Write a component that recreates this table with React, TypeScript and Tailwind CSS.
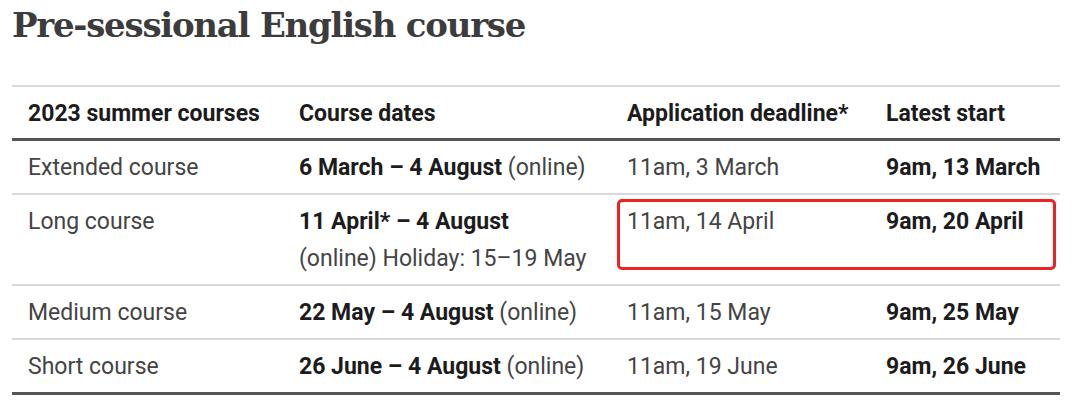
const rows = [
  {
    name: 'Extended course',
    dates: (
      <>
        <b className="font-bold text-[#1c1c1c]">6 March – 4 August</b> (online)
      </>
    ),
    deadline: '11am, 3 March',
    start: '9am, 13 March',
  },
  {
    name: 'Long course',
    dates: (
      <>
        <b className="font-bold text-[#1c1c1c]">11 April* – 4 August</b>
        <br />
        (online) Holiday: 15–19 May
      </>
    ),
    deadline: '11am, 14 April',
    start: '9am, 20 April',
    highlight: true,
  },
  {
    name: 'Medium course',
    dates: (
      <>
        <b className="font-bold text-[#1c1c1c]">22 May – 4 August</b> (online)
      </>
    ),
    deadline: '11am, 15 May',
    start: '9am, 25 May',
  },
  {
    name: 'Short course',
    dates: (
      <>
        <b className="font-bold text-[#1c1c1c]">26 June – 4 August</b> (online)
      </>
    ),
    deadline: '11am, 19 June',
    start: '9am, 26 June',
  },
];

export default function App() {
  return (
    <main className="w-[1080px] h-[411px] bg-white px-3 pt-[3px] font-['Roboto',sans-serif] text-[#444]">
      <h1 className="font-['DejaVu_Serif',serif] text-[34px] leading-[44px] font-bold tracking-[-1.25px] text-[#3c3c3c]">
        Pre-sessional English course
      </h1>

      <table className="mt-[38px] w-[1048px] border-collapse table-fixed text-[23px] leading-[37px]">
        <colgroup>
          <col className="w-[271px]" />
          <col className="w-[328px]" />
          <col className="w-[259px]" />
          <col className="w-[190px]" />
        </colgroup>
        <thead>
          <tr className="border-t-2 border-[#d9d9d9] border-b-[3px] border-b-[#555]">
            <th className="h-[53px] pl-4 pt-[2px] text-left font-bold text-[#1c1c1c]">2023 summer courses</th>
            <th className="pl-4 pt-[2px] text-left font-bold text-[#1c1c1c]">Course dates</th>
            <th className="pl-4 pt-[2px] text-left font-bold text-[#1c1c1c]">Application deadline*</th>
            <th className="pl-4 pt-[2px] text-left font-bold text-[#1c1c1c]">Latest start</th>
          </tr>
        </thead>
        <tbody>
          {rows.map((r, i) => (
            <tr
              key={r.name}
              className={
                i === rows.length - 1
                  ? 'border-b-[3px] border-[#555]'
                  : 'border-b-2 border-[#d9d9d9]'
              }
            >
              <td className="pl-4 pt-[8px] pb-[7px] align-top">{r.name}</td>
              <td className="pl-4 pt-[8px] pb-[7px] align-top whitespace-nowrap">{r.dates}</td>
              <td className="relative pl-4 pt-[8px] pb-[7px] align-top">
                {r.deadline}
                {r.highlight && (
                  <div className="absolute left-[6px] top-[4px] w-[439px] h-[71px] rounded-[5px] border-[3px] border-[#ee2222] pointer-events-none" />
                )}
              </td>
              <td className="pl-4 pt-[8px] pb-[7px] align-top font-bold text-[#1c1c1c] whitespace-nowrap">{r.start}</td>
            </tr>
          ))}
        </tbody>
      </table>
    </main>
  );
}
